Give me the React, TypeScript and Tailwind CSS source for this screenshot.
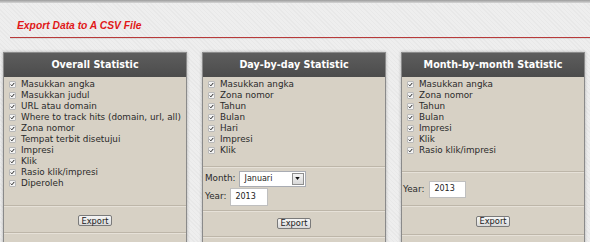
function Check() {
  return (
    <span className="flex h-[7px] w-[7px] shrink-0 items-center justify-center rounded-[1px] border border-[#b9b9b9] bg-[#f3f3f3]">
      <svg viewBox="0 0 7 7" className="h-[5px] w-[5px]">
        <path d="M1 3.6 L2.7 5.3 L6 1.3" fill="none" stroke="#222" strokeWidth="1.4" />
      </svg>
    </span>
  );
}

function Item({ label }: { label: string }) {
  return (
    <div className="flex h-[11.1px] items-center gap-[5px]">
      <Check />
      <span className="leading-[11.1px] whitespace-nowrap">{label}</span>
    </div>
  );
}

function Separator() {
  return <div className="h-[2px] border-t border-[#bdb6a9] bg-[#e6e1d8]" />;
}

function ExportButton({ className }: { className: string }) {
  return (
    <div className={`flex justify-center ${className}`}>
      <button className="flex h-[11px] w-[34px] items-center justify-center rounded-[2px] border border-[#7a7a7a] bg-gradient-to-b from-[#f6f6f6] to-[#d9d9d9] text-[8.3px] leading-none text-[#222]">
        Export
      </button>
    </div>
  );
}

function Panel({
  title,
  items,
  children,
}: {
  title: string;
  items: string[];
  children: React.ReactNode;
}) {
  return (
    <div className="flex h-[200px] w-[184px] shrink-0 flex-col border border-[#8a8a8a] bg-[#d7d1c5] shadow-[0_0_3px_rgba(0,0,0,0.25)]">
      <div className="flex h-[24px] items-center justify-center bg-gradient-to-b from-[#5d5d5d] to-[#4c4c4c] text-[9.6px] font-bold text-white">
        {title}
      </div>
      <div className="px-[5px] pt-[1.5px]">
        {items.map((label) => (
          <Item key={label} label={label} />
        ))}
      </div>
      {children}
    </div>
  );
}

function Input({ value, className }: { value: string; className: string }) {
  return (
    <span
      className={`flex items-center border border-[#bfbfbf] bg-white pl-[4px] text-[8px] text-[#222] ${className}`}
    >
      {value}
    </span>
  );
}

export default function App() {
  return (
    <div className="h-[242px] w-[590px] overflow-hidden bg-[#ececec] bg-[repeating-linear-gradient(45deg,#eeeeee_0px,#eeeeee_2px,#e8e8e8_2px,#e8e8e8_3px)] font-['DejaVu_Sans',sans-serif] text-[8.8px] text-[#2a2a2a]">
      <div className="h-[3px] bg-gradient-to-b from-[#9c9c9c] to-[#d6d6d6]" />

      <div className="ml-[10px] mt-[16px] border-b border-[#b83a3a] pb-[5px] pl-[7px] shadow-[0_1px_0_rgba(0,0,0,0.08)]">
        <h1 className="font-['Liberation_Sans',Arial,sans-serif] text-[10.3px] leading-[13px] font-bold italic text-[#e01818]">
          Export Data to A CSV File
        </h1>
      </div>

      <div className="mt-[14px] flex gap-[15px] pl-[3px]">
        <Panel
          title="Overall Statistic"
          items={[
            "Masukkan angka",
            "Masukkan judul",
            "URL atau domain",
            "Where to track hits (domain, url, all)",
            "Zona nomor",
            "Tempat terbit disetujui",
            "Impresi",
            "Klik",
            "Rasio klik/impresi",
            "Diperoleh",
          ]}
        >
          <div className="mt-[16px]">
            <Separator />
          </div>
          <ExportButton className="mt-[8px]" />
          <div className="mt-[6px]">
            <Separator />
          </div>
        </Panel>

        <Panel
          title="Day-by-day Statistic"
          items={[
            "Masukkan angka",
            "Zona nomor",
            "Tahun",
            "Bulan",
            "Hari",
            "Impresi",
            "Klik",
          ]}
        >
          <div className="mt-[9.5px]">
            <Separator />
          </div>
          <div className="flex flex-col gap-[1px] pl-[2px] pt-[3px]">
            <div className="flex items-center gap-[3px]">
              <span>Month:</span>
              <span className="flex h-[16px] w-[67px] items-center justify-between border border-[#a9acb3] bg-white pl-[5px] text-[8px] text-[#222]">
                Januari
                <span className="mr-[1px] flex h-[12px] w-[12px] items-center justify-center border border-[#8e8e8e] bg-gradient-to-b from-[#f4f4f4] to-[#d8d8d8]">
                  <svg viewBox="0 0 6 4" className="h-[3px] w-[5px]">
                    <path d="M0 0 H6 L3 4 Z" fill="#111" />
                  </svg>
                </span>
              </span>
            </div>
            <div className="flex items-center gap-[4px]">
              <span>Year:</span>
              <Input value="2013" className="h-[18px] w-[38px]" />
            </div>
          </div>
          <div className="mt-[4px]">
            <Separator />
          </div>
          <ExportButton className="mt-[6px]" />
          <div className="mt-[7px]">
            <Separator />
          </div>
        </Panel>

        <Panel
          title="Month-by-month Statistic"
          items={[
            "Masukkan angka",
            "Zona nomor",
            "Tahun",
            "Bulan",
            "Impresi",
            "Klik",
            "Rasio klik/impresi",
          ]}
        >
          <div className="mt-[14.5px]">
            <Separator />
          </div>
          <div className="flex items-center gap-[5px] pl-[1px] pt-[8px]">
            <span>Year:</span>
            <Input value="2013" className="h-[17px] w-[37px]" />
          </div>
          <div className="mt-[7px]">
            <Separator />
          </div>
          <ExportButton className="mt-[9px]" />
          <div className="mt-[7px]">
            <Separator />
          </div>
        </Panel>
      </div>
    </div>
  );
}
